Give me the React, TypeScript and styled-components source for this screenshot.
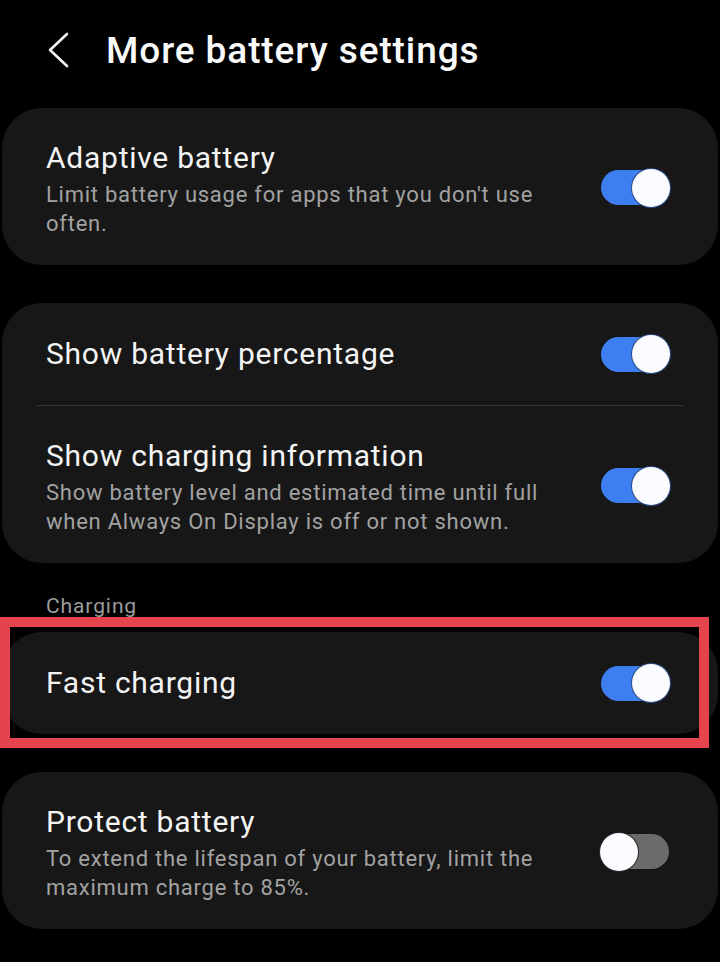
import styled, { createGlobalStyle } from 'styled-components';

const GlobalStyle = createGlobalStyle`
  html, body {
    margin: 0;
    padding: 0;
    background: #000;
  }
  body {
    font-family: Roboto, "Noto Sans", "Liberation Sans", sans-serif;
    color: #f4f4f4;
    -webkit-font-smoothing: antialiased;
  }
`;

const Page = styled.div`
  width: 720px;
  min-height: 962px;
  background: #000;
  display: flex;
  flex-direction: column;
`;

const Header = styled.header`
  height: 100px;
  display: flex;
  align-items: center;
  gap: 35px;
  padding-left: 47px;
  margin-bottom: 8px;
`;

const BackButton = styled.button`
  border: none;
  background: none;
  padding: 0;
  width: 24px;
  height: 36px;
  display: flex;
  align-items: center;
  cursor: pointer;
`;

const Title = styled.h1`
  margin: 0;
  font-size: 37px;
  font-weight: 500;
  color: #fafafa;
  letter-spacing: 0.9px;
`;

const List = styled.div`
  display: flex;
  flex-direction: column;
`;

const Card = styled.section<{ $gapAfter?: number }>`
  margin: 0 2px ${(p) => p.$gapAfter ?? 38}px;
  background: #171717;
  border-radius: 40px;
  display: flex;
  flex-direction: column;
`;

const Row = styled.div<{ $single?: boolean }>`
  display: flex;
  align-items: center;
  gap: 30px;
  padding: ${(p) => (p.$single ? '0' : '32px 0 27px')};
  min-height: ${(p) => (p.$single ? '102px' : 'auto')};
  padding-left: 44px;
  padding-right: 49px;
  box-sizing: border-box;
`;

const TextBlock = styled.div`
  flex: 1;
  display: flex;
  flex-direction: column;
  gap: 4px;
`;

const RowTitle = styled.div`
  font-size: 30px;
  line-height: 36px;
  letter-spacing: 0.75px;
  color: #f4f4f4;
`;

const RowSub = styled.div`
  font-size: 22px;
  line-height: 29px;
  letter-spacing: 0.75px;
  color: #a2a2a2;
`;

const Divider = styled.div`
  height: 1px;
  background: #363636;
  margin: 0 35px;
`;

const SectionLabel = styled.div`
  font-size: 21px;
  line-height: 28px;
  letter-spacing: 0.9px;
  color: #9c9c9c;
  padding-left: 46px;
  margin: -9px 0 12px;
`;

const Track = styled.div<{ $on: boolean; $raised?: boolean }>`
  position: relative;
  width: 68px;
  height: 35px;
  flex-shrink: 0;
  margin-bottom: ${(p) => (p.$raised ? '3px' : '0')};
  border-radius: 18px;
  background: ${(p) => (p.$on ? '#3d7ff0' : '#6b6b69')};
`;

const Knob = styled.div<{ $on: boolean }>`
  position: absolute;
  top: 50%;
  ${(p) => (p.$on ? 'right: -1px;' : 'left: -1px;')}
  width: 38px;
  height: 38px;
  margin-top: -19px;
  border-radius: 50%;
  background: #fbfcff;
  box-shadow: ${(p) => (p.$on ? '0 0 0 1px #2c4c88' : '0 0 0 1px #2a2a2a')};
`;

const HighlightWrap = styled.div`
  position: relative;
  margin-bottom: 38px;
`;

const Highlight = styled.div`
  position: absolute;
  left: 0;
  top: -15px;
  width: 709px;
  height: 131px;
  box-sizing: border-box;
  border: 10px solid #e4444e;
  pointer-events: none;
`;

const Toggle = ({ on, raised }: { on: boolean; raised?: boolean }) => (
  <Track $on={on} $raised={raised}>
    <Knob $on={on} />
  </Track>
);

interface SettingProps {
  title: string;
  sub?: string;
  on: boolean;
}

const Setting = ({ title, sub, on }: SettingProps) => (
  <Row $single={!sub}>
    <TextBlock>
      <RowTitle>{title}</RowTitle>
      {sub && <RowSub>{sub}</RowSub>}
    </TextBlock>
    <Toggle on={on} raised={!!sub} />
  </Row>
);

export default function App() {
  return (
    <Page>
      <GlobalStyle />
      <Header>
        <BackButton aria-label="Back">
          <svg width="24" height="36" viewBox="0 0 24 36" fill="none">
            <path d="M20 2 L3 18 L20 34" stroke="#f4f4f4" strokeWidth="2.6" strokeLinecap="round" strokeLinejoin="round" />
          </svg>
        </BackButton>
        <Title>More battery settings</Title>
      </Header>

      <List>
        <Card>
          <Setting title="Adaptive battery" sub="Limit battery usage for apps that you don't use often." on />
        </Card>

        <Card>
          <Setting title="Show battery percentage" on />
          <Divider />
          <Setting
            title="Show charging information"
            sub="Show battery level and estimated time until full when Always On Display is off or not shown."
            on
          />
        </Card>

        <SectionLabel>Charging</SectionLabel>

        <HighlightWrap>
          <Card $gapAfter={0}>
            <Setting title="Fast charging" on />
          </Card>
          <Highlight />
        </HighlightWrap>

        <Card>
          <Setting
            title="Protect battery"
            sub="To extend the lifespan of your battery, limit the maximum charge to 85%."
            on={false}
          />
        </Card>
      </List>
    </Page>
  );
}
